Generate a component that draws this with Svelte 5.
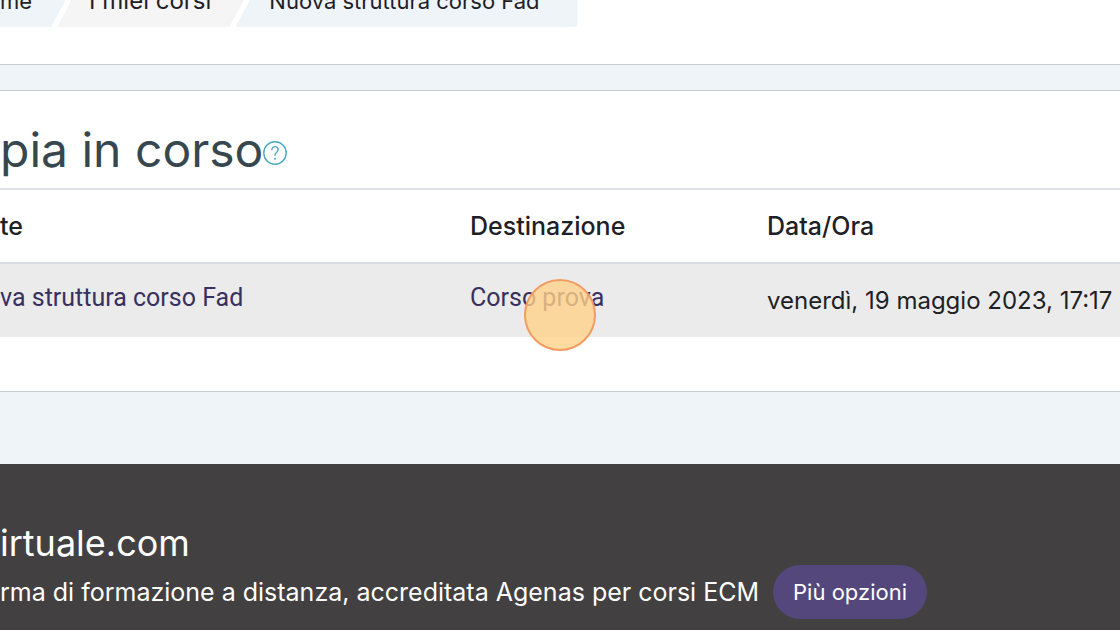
<script lang="ts">
	type Crumb = { label: string; kind: string };
	type Copy = { source: string; destination: string; date: string };

	const crumbs: Crumb[] = [
		{ label: 'me', kind: 'first' },
		{ label: 'I miei corsi', kind: 'middle' },
		{ label: 'Nuova struttura corso Fad', kind: 'last' }
	];

	const copies: Copy[] = [
		{
			source: 'va struttura corso Fad',
			destination: 'Corso prova',
			date: 'venerdì, 19 maggio 2023, 17:17'
		}
	];
</script>

<div class="page">
	<header>
		<nav aria-label="Breadcrumb">
			<ol>
				{#each crumbs as crumb}
					<li class={crumb.kind}><a href="#top">{crumb.label}</a></li>
				{/each}
			</ol>
		</nav>
	</header>

	<main>
		<div class="title">
			<h1>pia in corso</h1>
			<button class="help" aria-label="Aiuto">
				<svg viewBox="0 0 24 24" width="24" height="24" fill="none" stroke="currentColor">
					<circle cx="12" cy="12" r="11.2" stroke-width="1.4" />
					<path
						d="M8.9 8.8C8.9 6.8 10.2 5.6 12 5.6s3.2 1.2 3.2 3c0 2.5-3.2 2.7-3.2 5.6"
						stroke-width="1.4"
						stroke-linecap="round"
					/>
					<circle cx="12" cy="17.8" r="1" fill="currentColor" stroke="none" />
				</svg>
			</button>
		</div>

		<table>
			<thead>
				<tr>
					<th class="source">te</th>
					<th class="destination">Destinazione</th>
					<th>Data/Ora</th>
				</tr>
			</thead>
			<tbody>
				{#each copies as copy}
					<tr>
						<td class="source"><a href="#source">{copy.source}</a></td>
						<td class="destination">
							<a href="#destination">{copy.destination}</a>
							<span class="click-marker"></span>
						</td>
						<td class="date">{copy.date}</td>
					</tr>
				{/each}
			</tbody>
		</table>
	</main>

	<footer>
		<h2>irtuale.com</h2>
		<div class="about">
			<p>rma di formazione a distanza, accreditata Agenas per corsi ECM</p>
			<button class="more">Più opzioni</button>
		</div>
	</footer>
</div>

<style>
	:global(body) {
		background: #eef4f8;
		overflow: hidden;
	}

	.page {
		font-family: Inter, 'Open Sans', sans-serif;
		font-size: 24px;
		line-height: 36px;
		color: #1d2125;
		white-space: nowrap;
	}

	header {
		padding-bottom: 37px;
		background: #fff;
		border-bottom: 1px solid #c8cdd4;
	}

	ol {
		display: flex;
		align-items: flex-end;
		height: 27px;
		margin: 0;
		padding: 0;
		overflow: hidden;
		list-style: none;
	}

	li {
		flex: none;
		box-sizing: border-box;
		height: 52px;
		font-size: 22px;
		line-height: 52px;
		background: #eef4f8;
	}

	li a {
		color: inherit;
	}

	.first {
		padding-right: 33px;
		clip-path: polygon(0 0, calc(100% - 14px) 0, 100% 50%, calc(100% - 14px) 100%, 0 100%);
	}

	.middle {
		margin-left: -8px;
		padding: 0 32px;
		font-size: 24px;
		background: #f5f5f5;
		clip-path: polygon(0 0, calc(100% - 14px) 0, 100% 50%, calc(100% - 14px) 100%, 0 100%, 14px 50%);
	}

	.last {
		margin-left: -8px;
		padding: 0 38px 0 34px;
		border-radius: 4px;
		clip-path: polygon(0 0, 100% 0, 100% 100%, 0 100%, 14px 50%);
	}

	a {
		color: #38305f;
		text-decoration: none;
	}

	main {
		margin-top: 25px;
		padding: 24px 0 54px;
		background: #fff;
		border-top: 1px solid #c8cdd4;
		border-bottom: 1px solid #c8cdd4;
	}

	.title {
		display: flex;
		align-items: center;
		padding-bottom: 4px;
	}

	h1 {
		margin: 0;
		font-size: 48px;
		font-weight: 400;
		line-height: 69px;
		color: #37474f;
	}

	.help {
		display: flex;
		padding: 6px 0 0;
		border: 0;
		background: none;
		color: #4aa9c4;
	}

	table {
		width: 100%;
		table-layout: fixed;
		border-collapse: separate;
		border-spacing: 0;
		border-top: 2px solid #dee2e6;
	}

	th,
	td {
		box-sizing: border-box;
		padding: 18px 0 18px 18px;
		text-align: left;
		vertical-align: top;
	}

	th {
		font-size: 25px;
		font-weight: 500;
		border-bottom: 2px solid #d9dce2;
	}

	td {
		padding-top: 19px;
		background: #ebebeb;
	}

	td a {
		font-family: Roboto, sans-serif;
		font-size: 25px;
	}

	.source {
		width: 452px;
		padding-left: 0;
	}

	.destination {
		position: relative;
		width: 297px;
	}

	td.source,
	td.destination {
		padding-top: 16px;
	}

	.click-marker {
		position: absolute;
		top: 15px;
		left: 72px;
		box-sizing: border-box;
		width: 72px;
		height: 72px;
		border: 2px solid #f29b62;
		border-radius: 50%;
		background: rgba(255, 209, 138, 0.8);
	}

	footer {
		margin-top: 72px;
		padding: 57px 0 40px;
		background: #424041;
		color: #fff;
	}

	h2 {
		margin: 0;
		font-size: 36px;
		font-weight: 400;
		line-height: 44px;
	}

	.about {
		display: flex;
		align-items: center;
		gap: 14px;
		font-size: 25px;
	}

	.about p {
		margin: 0;
	}

	.more {
		height: 54px;
		padding: 0 20px;
		border: 0;
		border-radius: 27px;
		background: #53477c;
		color: #fff;
		font-family: inherit;
		font-size: 22px;
	}
</style>
